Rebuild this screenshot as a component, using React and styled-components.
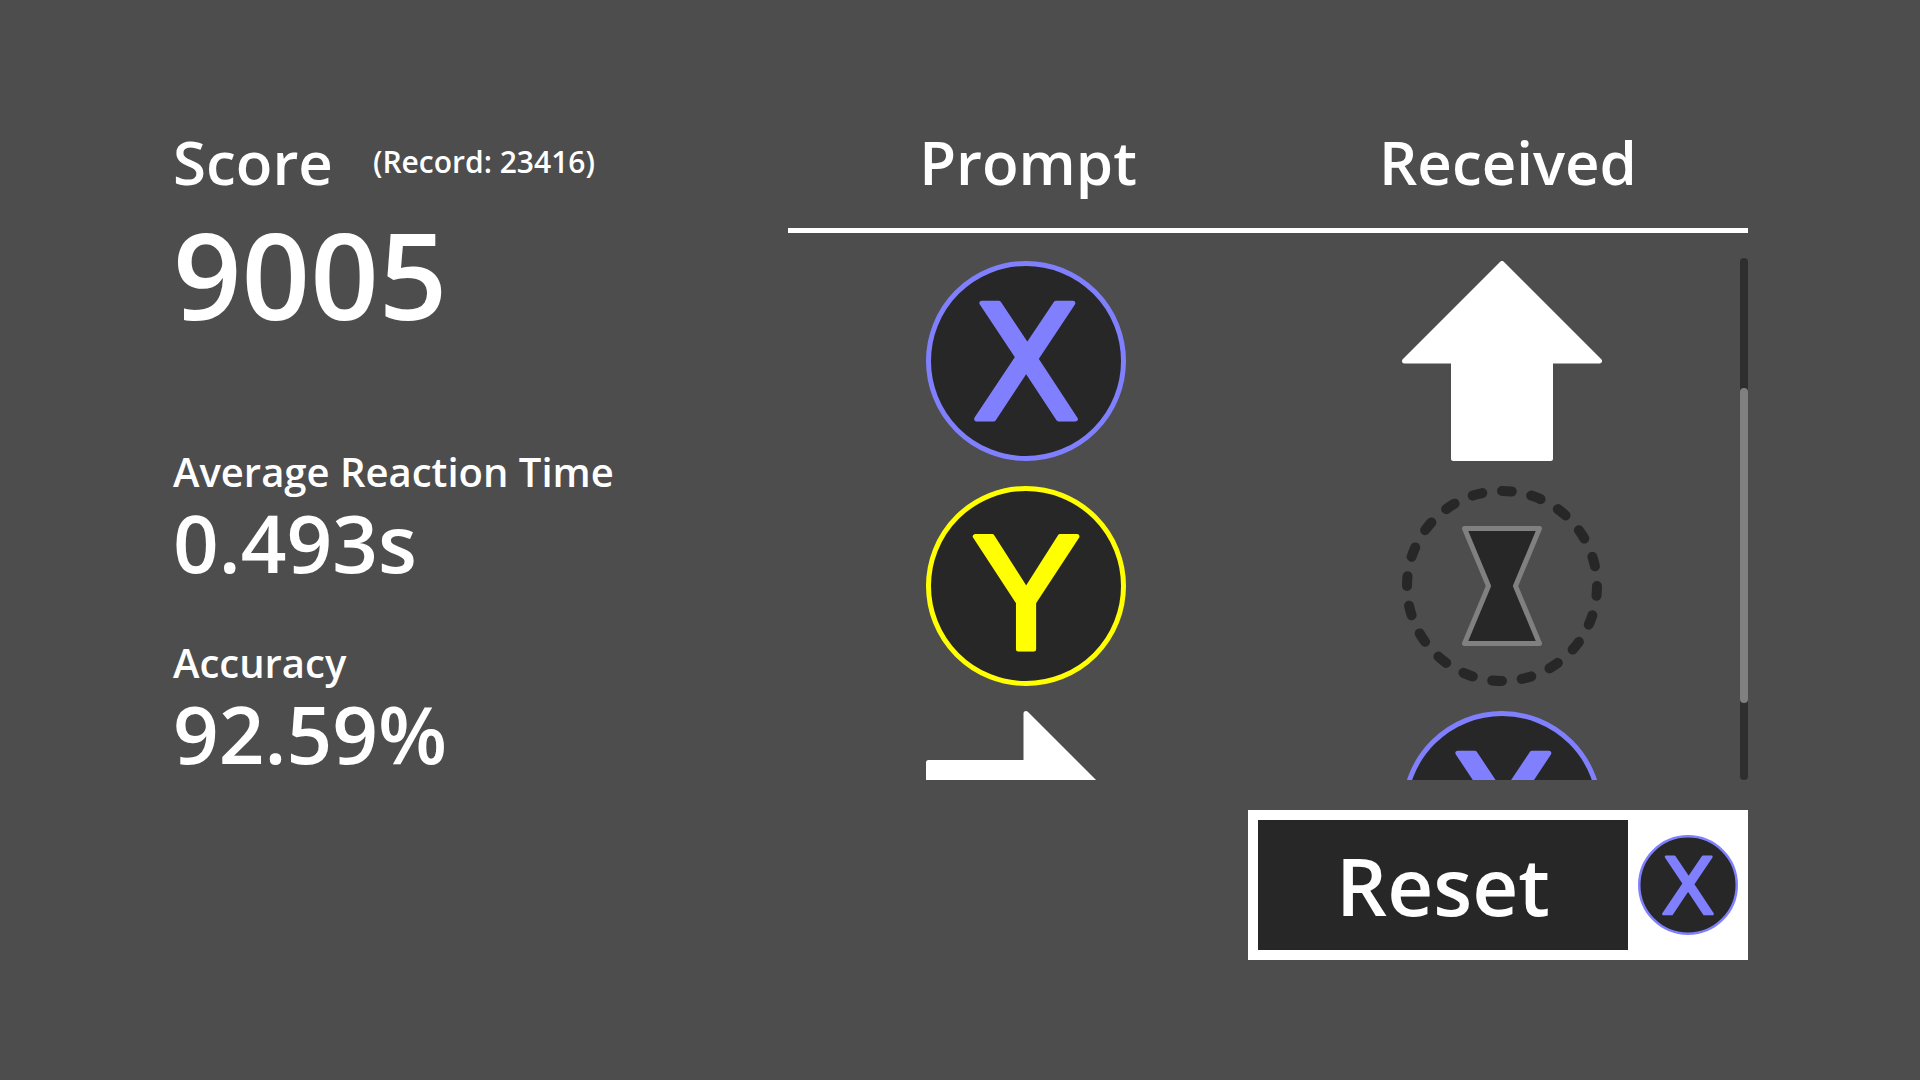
import React, { useLayoutEffect, useRef, useState } from "react";
import styled, { createGlobalStyle } from "styled-components";

const GlobalStyle = createGlobalStyle`
  * {
    box-sizing: border-box;
  }

  body {
    margin: 0;
    background: #4d4d4d;
    color: #ffffff;
    font-family: "Open Sans", "Noto Sans", sans-serif;
    font-weight: 600;
  }
`;

const Page = styled.main`
  display: flex;
  height: 100vh;
  min-height: 720px;
  padding: 121px 172px 120px 173px;
`;

const Summary = styled.section`
  flex: 1;
  min-width: 0;
`;

const ScoreHeader = styled.div`
  display: flex;
  align-items: center;
  gap: 40px;
`;

const Heading = styled.h1`
  margin: 0;
  font-size: 60px;
  font-weight: 600;
  line-height: 82px;
`;

const Record = styled.span`
  font-size: 30px;
  line-height: 40px;
  white-space: nowrap;
`;

const Score = styled.p`
  margin: 0;
  font-size: 120px;
  line-height: 142px;
`;

const Stats = styled.dl`
  display: flex;
  flex-direction: column;
  gap: 51px;
  margin: 100px 0 0;

  dt {
    font-size: 40px;
    line-height: 54px;
  }

  dd {
    margin: 0;
    font-size: 80px;
    line-height: 86px;
  }
`;

const Results = styled.section`
  display: flex;
  flex-direction: column;
  gap: 30px;
  width: 50vw;
`;

const History = styled.div`
  display: grid;
  grid-template-columns: 1fr 8px;
  grid-template-rows: auto minmax(0, 1fr);
  row-gap: 25px;
  flex: 1;
  min-height: 0;
`;

const HistoryTable = styled.table`
  display: contents;

  tr {
    display: grid;
    grid-template-columns: 1fr 1fr;
    justify-items: center;
  }

  thead {
    display: block;
    grid-column: 1 / -1;
    padding-bottom: 25px;
    border-bottom: 5px solid #ffffff;
  }

  tbody {
    display: grid;
    align-content: start;
    gap: 25px;
    overflow-y: auto;
    scrollbar-width: none;
    outline: none;
  }

  th {
    padding: 0;
    font-size: 60px;
    font-weight: 600;
    line-height: 82px;
  }

  td {
    padding: 0;
  }
`;

const Track = styled.div`
  border-radius: 4px;
  background: #2e2e2e;
`;

const Thumb = styled.div`
  border-radius: 4px;
  background: #808080;
`;

const Icon = styled.svg`
  display: block;
  width: ${({ $size }) => $size}px;
  height: ${({ $size }) => $size}px;
`;

const Letter = styled.text`
  font-weight: 400;
  text-anchor: middle;
`;

const LetterX = styled(Letter)`
  font-family: "DejaVu Sans", sans-serif;
  font-size: 158px;
`;

const LetterY = styled(Letter)`
  font-family: "Liberation Sans", Arial, sans-serif;
  font-size: 163px;
`;

const ResetButton = styled.button`
  display: flex;
  align-items: center;
  align-self: flex-end;
  gap: 10px;
  width: 500px;
  padding: 10px;
  border: 0;
  background: #ffffff;
  color: #ffffff;
  font: inherit;
  cursor: pointer;
`;

const ResetLabel = styled.span`
  flex: 1;
  background: #272727;
  font-size: 80px;
  line-height: 130px;
  text-align: center;
`;

const FaceButton = ({ label, color, size = 200, children }) => (
  <Icon $size={size} viewBox="0 0 200 200" role="img" aria-label={label}>
    <g stroke={color} strokeWidth="5" strokeLinejoin="round">
      <circle cx="100" cy="100" r="97.5" fill="#272727" />
      <g fill={color}>{children}</g>
    </g>
  </Icon>
);

const XButton = ({ size }) => (
  <FaceButton label="X" color="#8080ff" size={size}>
    <LetterX x="100" y="157.5">
      X
    </LetterX>
  </FaceButton>
);

const YButton = ({ size }) => (
  <FaceButton label="Y" color="#ffff00" size={size}>
    <LetterY x="100" y="162.5">
      Y
    </LetterY>
  </FaceButton>
);

const Arrow = ({ angle, label }) => (
  <Icon $size={200} viewBox="0 0 200 200" role="img" aria-label={label}>
    <path
      d="M100 2.5 L197.5 100 H148.5 V197.5 H51.5 V100 H2.5 Z"
      transform={`rotate(${angle} 100 100)`}
      fill="#ffffff"
      stroke="#ffffff"
      strokeWidth="5"
      strokeLinejoin="round"
    />
  </Icon>
);

const Timeout = () => (
  <Icon $size={200} viewBox="0 0 200 200" role="img" aria-label="Timed out">
    <circle
      cx="100"
      cy="100"
      r="95"
      fill="none"
      stroke="#272727"
      strokeWidth="10"
      strokeLinecap="round"
      strokeDasharray="10 20"
      pathLength="600"
      transform="rotate(-90 100 100)"
    />
    <path
      d="M62.5 42.5 H137.5 L113.5 100 L137.5 157.5 H62.5 L86.5 100 Z"
      fill="#272727"
      stroke="#808080"
      strokeWidth="5"
      strokeLinejoin="round"
    />
  </Icon>
);

const inputs = {
  x: <XButton />,
  y: <YButton />,
  up: <Arrow angle={0} label="Up" />,
  right: <Arrow angle={90} label="Right" />,
  timeout: <Timeout />,
};

const mistakes = [
  { prompt: "up", received: "right" },
  { prompt: "x", received: "up" },
  { prompt: "y", received: "timeout" },
  { prompt: "right", received: "x" },
];

const INITIAL_SCROLL = 222;
const MIN_THUMB = 8;

const MistakeHistory = () => {
  const listEl = useRef(null);
  const [thumb, setThumb] = useState({ top: 0, height: 0 });

  const updateThumb = () => {
    const { clientHeight, scrollHeight, scrollTop } = listEl.current;
    const range = clientHeight - MIN_THUMB;

    setThumb({
      top: Math.round((scrollTop / scrollHeight) * range),
      height: Math.round((clientHeight / scrollHeight) * range) + MIN_THUMB,
    });
  };

  useLayoutEffect(() => {
    listEl.current.scrollTop = INITIAL_SCROLL;
    updateThumb();

    window.addEventListener("resize", updateThumb);
    return () => window.removeEventListener("resize", updateThumb);
  }, []);

  return (
    <History>
      <HistoryTable>
        <thead>
          <tr>
            <th scope="col">Prompt</th>
            <th scope="col">Received</th>
          </tr>
        </thead>
        <tbody ref={listEl} onScroll={updateThumb} tabIndex={0}>
          {mistakes.map(({ prompt, received }, index) => (
            <tr key={index}>
              <td>{inputs[prompt]}</td>
              <td>{inputs[received]}</td>
            </tr>
          ))}
        </tbody>
      </HistoryTable>
      <Track aria-hidden="true">
        <Thumb style={{ height: thumb.height, marginTop: thumb.top }} />
      </Track>
    </History>
  );
};

const App = () => (
  <>
    <GlobalStyle />
    <Page>
      <Summary>
        <ScoreHeader>
          <Heading>Score</Heading>
          <Record>(Record: 23416)</Record>
        </ScoreHeader>
        <Score>9005</Score>
        <Stats>
          <div>
            <dt>Average Reaction Time</dt>
            <dd>0.493s</dd>
          </div>
          <div>
            <dt>Accuracy</dt>
            <dd>92.59%</dd>
          </div>
        </Stats>
      </Summary>
      <Results>
        <MistakeHistory />
        <ResetButton type="button">
          <ResetLabel>Reset</ResetLabel>
          <XButton size={100} />
        </ResetButton>
      </Results>
    </Page>
  </>
);

export default App;
